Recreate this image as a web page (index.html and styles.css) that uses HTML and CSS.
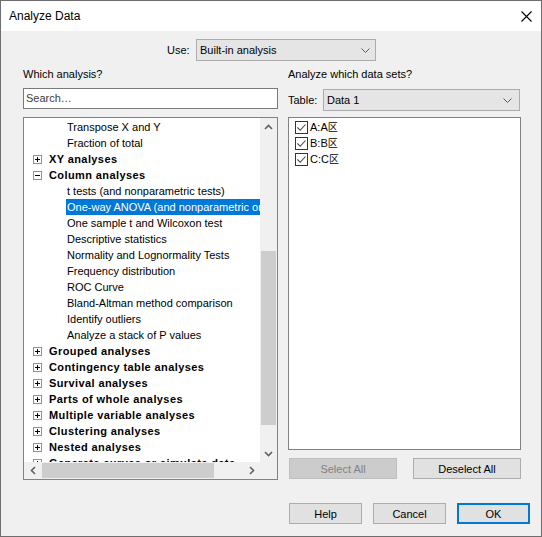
FILE: index.html
```html
<!DOCTYPE html>
<html>
<head>
<meta charset="utf-8">
<link rel="stylesheet" href="styles.css">
</head>
<body>
<div class="window">
  <div class="titlebar">
    <span class="title">Analyze Data</span>
    <svg class="close" width="11" height="11" viewBox="0 0 11 11"><path d="M0.5 0.5 L10.5 10.5 M10.5 0.5 L0.5 10.5" stroke="#000" stroke-width="1.1" fill="none"/></svg>
  </div>
  <div class="content">
    <div class="use-row">
      <span class="use-label">Use:</span>
      <div class="combo use-combo">
        <span class="combo-text">Built-in analysis</span>
        <svg class="chev" width="9" height="5" viewBox="0 0 9 5"><path d="M0.5 0.5 L4.5 4.5 L8.5 0.5" stroke="#5a5a5a" stroke-width="1" fill="none"/></svg>
      </div>
    </div>
    <div class="columns">
      <div class="col col-left">
        <div class="label">Which analysis?</div>
        <div class="search">Search…</div>
        <div class="tree">
          <div class="tree-view">
            <div class="row leaf"><span class="leaf-label">Transpose X and Y</span></div>
            <div class="row leaf"><span class="leaf-label">Fraction of total</span></div>
            <div class="row cat"><span class="exp plus"></span><span class="cat-label">XY analyses</span></div>
            <div class="row cat"><span class="exp minus"></span><span class="cat-label">Column analyses</span></div>
            <div class="row leaf"><span class="leaf-label">t tests (and nonparametric tests)</span></div>
            <div class="row leaf"><span class="leaf-label selected">One-way ANOVA (and nonparametric or mixed)</span></div>
            <div class="row leaf"><span class="leaf-label">One sample t and Wilcoxon test</span></div>
            <div class="row leaf"><span class="leaf-label">Descriptive statistics</span></div>
            <div class="row leaf"><span class="leaf-label">Normality and Lognormality Tests</span></div>
            <div class="row leaf"><span class="leaf-label">Frequency distribution</span></div>
            <div class="row leaf"><span class="leaf-label">ROC Curve</span></div>
            <div class="row leaf"><span class="leaf-label">Bland-Altman method comparison</span></div>
            <div class="row leaf"><span class="leaf-label">Identify outliers</span></div>
            <div class="row leaf"><span class="leaf-label">Analyze a stack of P values</span></div>
            <div class="row cat"><span class="exp plus"></span><span class="cat-label">Grouped analyses</span></div>
            <div class="row cat"><span class="exp plus"></span><span class="cat-label">Contingency table analyses</span></div>
            <div class="row cat"><span class="exp plus"></span><span class="cat-label">Survival analyses</span></div>
            <div class="row cat"><span class="exp plus"></span><span class="cat-label">Parts of whole analyses</span></div>
            <div class="row cat"><span class="exp plus"></span><span class="cat-label">Multiple variable analyses</span></div>
            <div class="row cat"><span class="exp plus"></span><span class="cat-label">Clustering analyses</span></div>
            <div class="row cat"><span class="exp plus"></span><span class="cat-label">Nested analyses</span></div>
            <div class="row cat"><span class="exp plus"></span><span class="cat-label">Generate curves or simulate data</span></div>
          </div>
          <div class="vscroll">
            <div class="sbtn">
              <svg width="9" height="6" viewBox="0 0 9 6"><path d="M1 5 L4.5 1.5 L8 5" stroke="#606060" stroke-width="1.6" fill="none"/></svg>
            </div>
            <div class="vtrack"><div class="vthumb"></div></div>
            <div class="sbtn">
              <svg width="9" height="6" viewBox="0 0 9 6"><path d="M1 1 L4.5 4.5 L8 1" stroke="#606060" stroke-width="1.6" fill="none"/></svg>
            </div>
          </div>
          <div class="hscroll">
            <div class="sbtn">
              <svg width="6" height="9" viewBox="0 0 6 9"><path d="M5 1 L1.5 4.5 L5 8" stroke="#606060" stroke-width="1.6" fill="none"/></svg>
            </div>
            <div class="htrack"><div class="hthumb"></div></div>
            <div class="sbtn">
              <svg width="6" height="9" viewBox="0 0 6 9"><path d="M1 1 L4.5 4.5 L1 8" stroke="#606060" stroke-width="1.6" fill="none"/></svg>
            </div>
          </div>
          <div class="corner"></div>
        </div>
      </div>
      <div class="col col-right">
        <div class="label">Analyze which data sets?</div>
        <div class="table-row">
          <span class="table-label">Table:</span>
          <div class="combo table-combo">
            <span class="combo-text">Data 1</span>
            <svg class="chev" width="9" height="5" viewBox="0 0 9 5"><path d="M0.5 0.5 L4.5 4.5 L8.5 0.5" stroke="#5a5a5a" stroke-width="1" fill="none"/></svg>
          </div>
        </div>
        <div class="listbox">
          <div class="check-row"><span class="cb"><svg width="11" height="11" viewBox="0 0 11 11"><path d="M1.5 5.5 L4.2 8.3 L9.5 2.5" stroke="#444" stroke-width="1.1" fill="none"/></svg></span><span class="cb-text">A:A<span class="cjk">区</span></span></div>
          <div class="check-row"><span class="cb"><svg width="11" height="11" viewBox="0 0 11 11"><path d="M1.5 5.5 L4.2 8.3 L9.5 2.5" stroke="#444" stroke-width="1.1" fill="none"/></svg></span><span class="cb-text">B:B<span class="cjk">区</span></span></div>
          <div class="check-row"><span class="cb"><svg width="11" height="11" viewBox="0 0 11 11"><path d="M1.5 5.5 L4.2 8.3 L9.5 2.5" stroke="#444" stroke-width="1.1" fill="none"/></svg></span><span class="cb-text">C:C<span class="cjk">区</span></span></div>
        </div>
        <div class="sel-buttons">
          <div class="btn disabled">Select All</div>
          <div class="btn">Deselect All</div>
        </div>
      </div>
    </div>
    <div class="footer">
      <div class="btn small">Help</div>
      <div class="btn small">Cancel</div>
      <div class="btn small default">OK</div>
    </div>
  </div>
</div>
</body>
</html>
```

FILE: styles.css
```css
html, body {
  margin: 0;
  padding: 0;
}
body {
  width: 542px;
  height: 537px;
  font-family: "Liberation Sans", Arial, sans-serif;
  font-size: 11px;
  color: #000;
}
.window {
  box-sizing: border-box;
  width: 542px;
  height: 537px;
  border: 1px solid #6e6e6e;
  background: #f0f0f0;
  display: flex;
  flex-direction: column;
}
.titlebar {
  height: 30px;
  background: #fff;
  display: flex;
  align-items: center;
  justify-content: space-between;
  padding: 0 9px 0 8px;
}
.title {
  font-size: 12px;
}
.close {
  display: block;
  margin-top: 1px;
}
.content {
  display: flex;
  flex-direction: column;
}
.use-row {
  display: flex;
  align-items: center;
  margin-top: 8px;
  padding-left: 166px;
  height: 22px;
}
.use-label {
  width: 29px;
}
.combo {
  box-sizing: border-box;
  height: 22px;
  background: #e5e5e5;
  border: 1px solid #acacac;
  display: flex;
  align-items: center;
  justify-content: space-between;
  padding: 0 5px 0 3px;
}
.chev {
  display: block;
}
.use-combo {
  width: 180px;
}
.columns {
  display: flex;
  margin-top: 6px;
  padding-left: 22px;
  gap: 10px;
}
.col {
  display: flex;
  flex-direction: column;
}
.col-left {
  width: 255px;
}
.col-right {
  width: 233px;
}
.label {
  height: 14px;
  line-height: 14px;
}
.search {
  box-sizing: border-box;
  margin-top: 7px;
  height: 21px;
  background: #fff;
  border: 1px solid #7a7a7a;
  padding-left: 2px;
  line-height: 19px;
  color: #404040;
}
.tree {
  box-sizing: border-box;
  margin-top: 8px;
  height: 363px;
  border: 1px solid #828282;
  background: #fff;
  display: grid;
  grid-template-columns: 236px 17px;
  grid-template-rows: 344px 17px;
}
.tree-view {
  overflow: hidden;
  padding-top: 1px;
  white-space: nowrap;
}
.row {
  height: 16px;
  line-height: 16px;
  display: flex;
  align-items: center;
}
.leaf {
  padding-left: 42px;
}
.leaf-label {
  padding: 0 1px;
  line-height: 16px;
}
.leaf-label.selected {
  background: #0078d7;
  color: #fff;
}
.cat {
  padding-left: 9px;
}
.cat-label {
  font-weight: bold;
  letter-spacing: 0.4px;
}
.exp {
  box-sizing: border-box;
  width: 9px;
  height: 9px;
  border: 1px solid #919191;
  margin-right: 7px;
  position: relative;
  flex: none;
  background: #fff;
}
.exp::before {
  content: "";
  position: absolute;
  left: 1px;
  top: 3px;
  width: 5px;
  height: 1px;
  background: #000;
}
.exp.plus::after {
  content: "";
  position: absolute;
  left: 3px;
  top: 1px;
  width: 1px;
  height: 5px;
  background: #000;
}
.vscroll {
  background: #f0f0f0;
  display: flex;
  flex-direction: column;
}
.hscroll {
  background: #f0f0f0;
  display: flex;
  flex-direction: row;
}
.corner {
  background: #f0f0f0;
}
.sbtn {
  width: 17px;
  height: 17px;
  flex: none;
  display: flex;
  align-items: center;
  justify-content: center;
}
.sbtn svg {
  display: block;
}
.vtrack {
  flex: 1;
}
.vthumb {
  margin: 116px 1px 0 1px;
  height: 174px;
  background: #cdcdcd;
}
.htrack {
  flex: 1;
}
.hthumb {
  margin: 1px 0 0 1px;
  width: 172px;
  height: 15px;
  background: #cdcdcd;
}
.table-row {
  display: flex;
  align-items: center;
  margin-top: 8px;
  height: 22px;
}
.table-label {
  width: 35px;
}
.table-combo {
  width: 197px;
  padding-right: 7px;
}
.listbox {
  box-sizing: border-box;
  margin-top: 6px;
  height: 333px;
  background: #fff;
  border: 1px solid #828282;
  padding: 1px 0 0 6px;
}
.check-row {
  height: 16px;
  display: flex;
  align-items: center;
}
.cb {
  box-sizing: border-box;
  width: 13px;
  height: 13px;
  border: 1px solid #333;
  background: #fff;
  display: flex;
  align-items: center;
  justify-content: center;
  margin-right: 2px;
}
.cb svg {
  display: block;
}
.cb-text {
  line-height: 16px;
}
.cjk {
  font-family: "Noto Sans CJK SC", sans-serif;
  font-size: 10px;
}
.sel-buttons {
  display: flex;
  justify-content: space-between;
  margin-top: 8px;
  padding-left: 1px;
}
.btn {
  box-sizing: border-box;
  width: 108px;
  height: 21px;
  background: #e1e1e1;
  border: 1px solid #adadad;
  display: flex;
  align-items: center;
  justify-content: center;
}
.btn.disabled {
  background: #cccccc;
  border-color: #bfbfbf;
  color: #838383;
}
.footer {
  display: flex;
  justify-content: flex-end;
  gap: 11px;
  margin-top: 23px;
  padding-right: 11px;
}
.btn.small {
  width: 73px;
}
.btn.default {
  border: 2px solid #0078d7;
}
```
